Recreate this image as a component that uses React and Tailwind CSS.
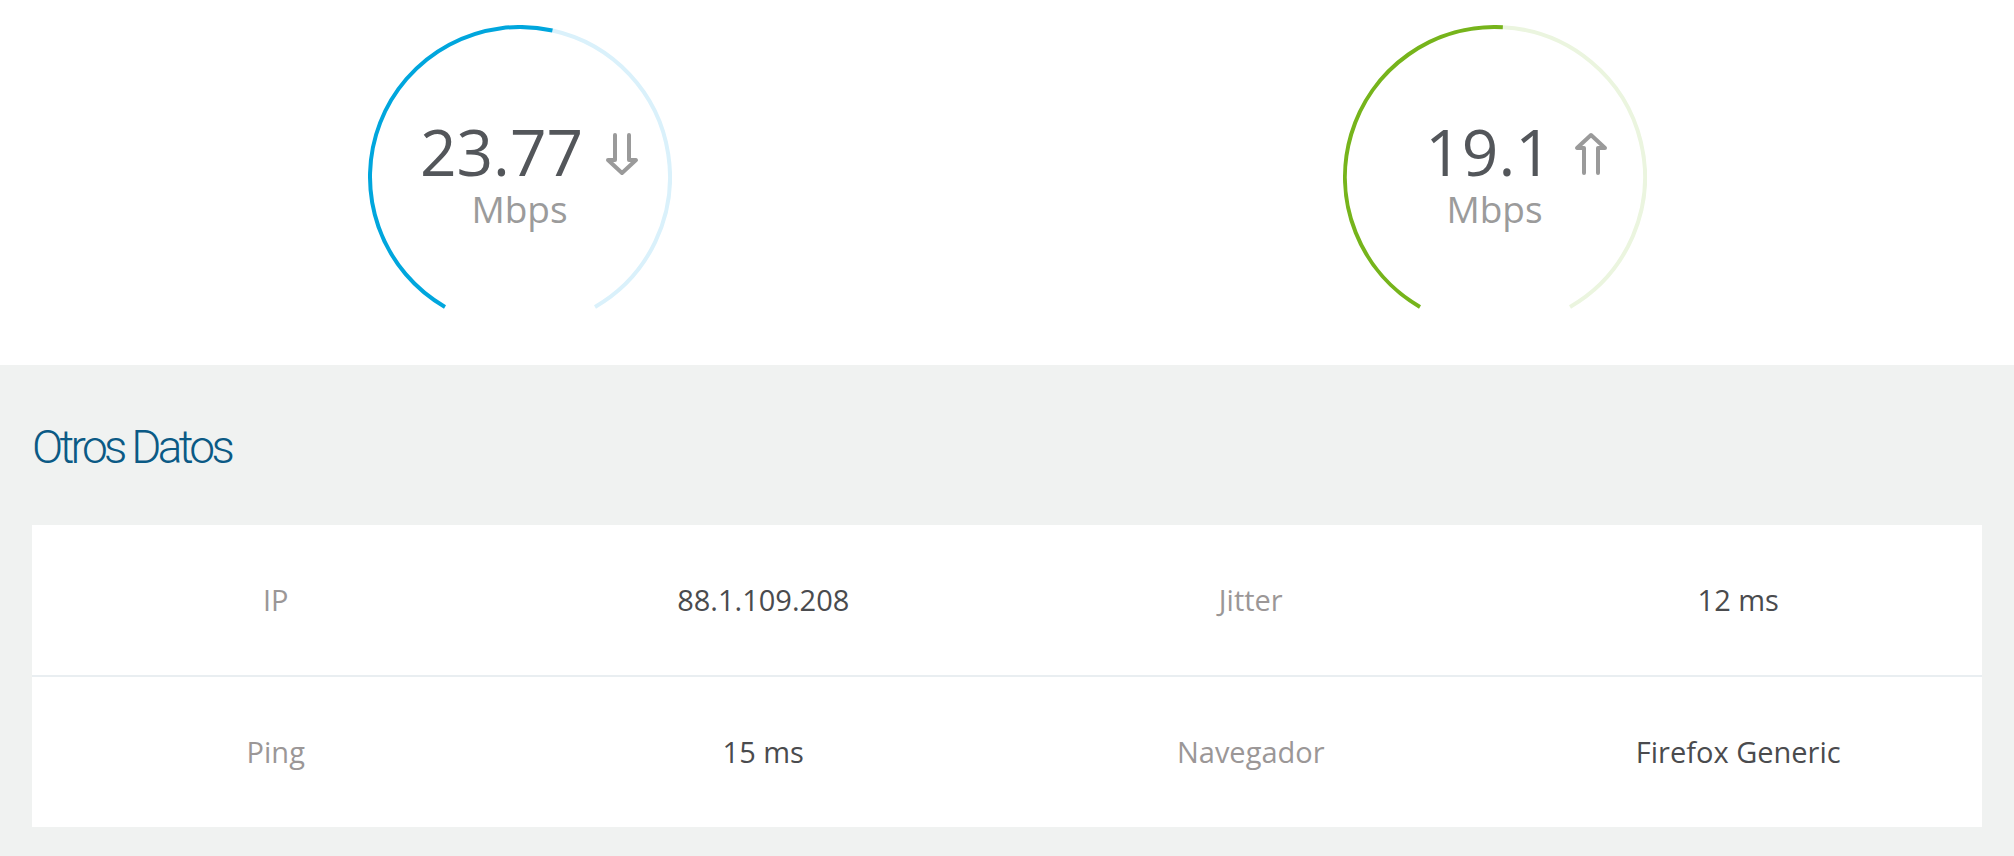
import React from "react";

const R = 150;
const C = 152;

// angle measured clockwise from the top of the circle
function arc(a0, a1) {
  const pt = (a) => [
    C + R * Math.sin((a * Math.PI) / 180),
    C - R * Math.cos((a * Math.PI) / 180),
  ];
  const [x0, y0] = pt(a0);
  const [x1, y1] = pt(a1);
  const large = a1 - a0 > 180 ? 1 : 0;
  return `M${x0} ${y0} A${R} ${R} 0 ${large} 1 ${x1} ${y1}`;
}

function ArrowIcon({ up }) {
  return (
    <svg
      width="34"
      height="44"
      viewBox="0 0 34 44"
      fill="none"
      stroke="#9a9a9a"
      strokeWidth="4"
      strokeLinecap="round"
      strokeLinejoin="round"
      className={up ? "rotate-180" : ""}
    >
      <path d="M10 3 V28 H3 L17 41 L31 28 H24 V3" />
    </svg>
  );
}

function Gauge({ value, end, color, track, up, shift }) {
  return (
    <div className="grid">
      <svg width="304" height="304" viewBox="0 0 304 304" className="[grid-area:1/1]">
        <path d={arc(end, 150)} stroke={track} strokeWidth="4" fill="none" />
        <path d={arc(-150, end)} stroke={color} strokeWidth="4" fill="none" />
      </svg>
      <div className="[grid-area:1/1] self-start justify-self-center mt-[95px] flex flex-col items-center">
        <div className={"flex items-center " + shift}>
          <div className="text-[64px] leading-none text-[#53565a]">{value}</div>
          <div className="ml-[22px] mt-[4px]">
            <ArrowIcon up={up} />
          </div>
        </div>
        <div className="mt-[6px] text-[37px] leading-none text-[#9b9b9b]">Mbps</div>
      </div>
    </div>
  );
}

const rows = [
  ["IP", "88.1.109.208", "Jitter", "12 ms"],
  ["Ping", "15 ms", "Navegador", "Firefox Generic"],
];

export default function App() {
  return (
    <div className="min-h-screen bg-[#f0f2f1] font-['Open_Sans',sans-serif]">
      <section className="bg-white h-[365px] px-8 grid grid-cols-2">
        <div className="flex justify-center pt-[25px]">
          <Gauge value="23.77" end={12.5} color="#00a6dd" track="#daf1fb" shift="pl-[20px]" />
        </div>
        <div className="flex justify-center pt-[25px]">
          <Gauge value="19.1" end={3} color="#76b41b" track="#ebf5df" up shift="pl-[44px]" />
        </div>
      </section>

      <section className="px-8 pt-[59px] pb-[29px]">
        <h2 className="font-['Roboto',sans-serif] font-light text-[46px] leading-none tracking-[-0.08em] text-[#0b5a85]">
          Otros Datos
        </h2>
        <div className="mt-[55px] bg-white">
          {rows.map((r, i) => (
            <div
              key={i}
              className={
                "grid grid-cols-4 h-[150px] items-center text-center text-[29px] " +
                (i > 0 ? "border-t-2 border-[#e9eef1] h-[152px]" : "")
              }
            >
              <span className="text-[#9b9797]">{r[0]}</span>
              <span className="text-[#4a4b4e]">{r[1]}</span>
              <span className="text-[#9b9797]">{r[2]}</span>
              <span className="text-[#4a4b4e]">{r[3]}</span>
            </div>
          ))}
        </div>
      </section>
    </div>
  );
}
